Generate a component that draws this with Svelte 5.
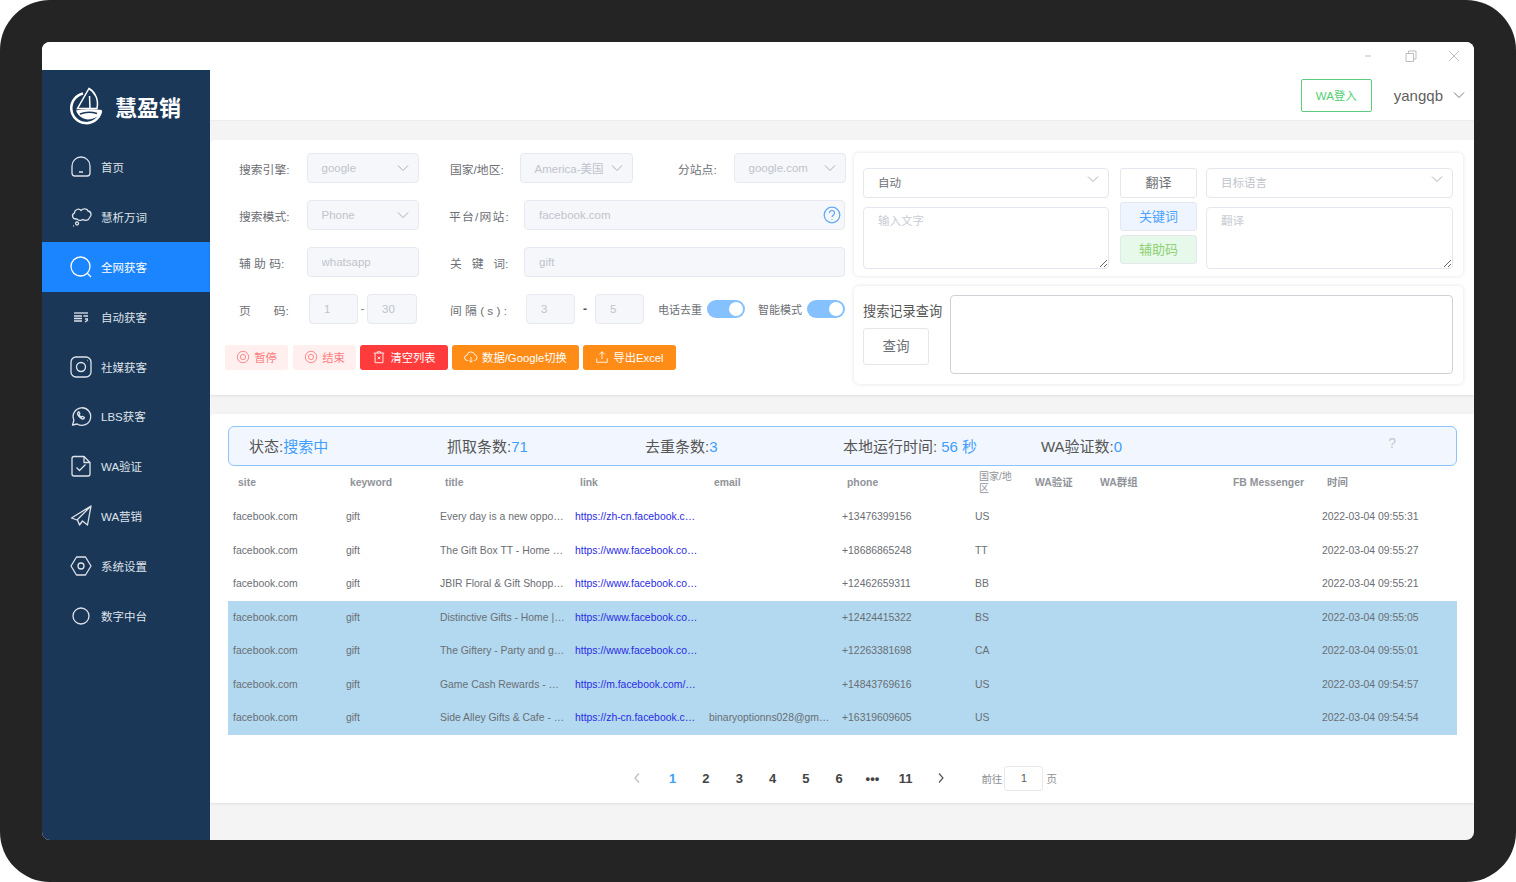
<script>
  const nav = [
    { label: '首页', icon: ['M7 22V15a9 9 0 0 1 18 0v7a3 3 0 0 1-3 3H10a3 3 0 0 1-3-3Z', 'M14 21h4'] },
    { label: '慧析万词', icon: ['M11 18c-3.500 0-5-4.500-1.500-6 0-3.500 4.500-5 6.500-2.500 2-2.500 6.500-2 7 .5 3.500.5 4 5 1.500 6.500-.5 3-4.500 3.500-6.500 2-2 1.500-5 1-6-.5Z', 'M12 21a1.500 1.500 0 1 0 .1 0', 'M8 25h.8'] },
    { label: '全网获客', icon: ['M15.500 6a9.500 9.500 0 1 0 0 19 9.500 9.500 0 0 0 0-19Z', 'M22.500 22.500l3.500 3.500'] },
    { label: '自动获客', icon: ['M9 12h14', 'M9 15h8M9 17.500h8M9 20h8', 'M18.500 15h4.500M20 18h3M20 21l3-2'] },
    { label: '社媒获客', icon: ['M11 6h10a5 5 0 0 1 5 5v10a5 5 0 0 1-5 5H11a5 5 0 0 1-5-5V11a5 5 0 0 1 5-5Z', 'M16 11.500a4.500 4.500 0 1 0 0 9 4.500 4.500 0 0 0 0-9Z', 'M22 9.500h.5'] },
    { label: 'LBS获客', icon: ['M7.500 25l1.400-4.800A8.800 8.800 0 1 1 12.200 24Z', 'M13 12.500c-1 1 0 3 1.500 4.500s3.500 2.500 4.500 1.500l.5-1-2-1.200-1 .8c-1-.4-2-1.400-2.400-2.400l.8-1-1.200-2Z'] },
    { label: 'WA验证', icon: ['M9 6.500h10l6 6V24a2 2 0 0 1-2 2H9a2 2 0 0 1-2-2V8.500a2 2 0 0 1 2-2Z', 'M19 6.500v6h6', 'M11.500 17.500l3 3 6-6'] },
    { label: 'WA营销', icon: ['M26 6L6.500 18l5.500 2L26 6Zl-3.500 19-5-4-3 4-2-5'] },
    { label: '系统设置', icon: ['M11.500 7h9L26 16l-5.500 9h-9L6 16Z', 'M16 13a3 3 0 1 0 0 6 3 3 0 0 0 0-6Z'] },
    { label: '数字中台', icon: ['M16 8a8 8 0 1 0 0 16 8 8 0 0 0 0-16Z'] }
  ];

  const rows = [
    ['Every day is a new oppo…', 'https://zh-cn.facebook.c…', '', '+13476399156', 'US', '2022-03-04 09:55:31'],
    ['The Gift Box TT - Home …', 'https://www.facebook.co…', '', '+18686865248', 'TT', '2022-03-04 09:55:27'],
    ['JBIR Floral & Gift Shopp…', 'https://www.facebook.co…', '', '+12462659311', 'BB', '2022-03-04 09:55:21'],
    ['Distinctive Gifts - Home |…', 'https://www.facebook.co…', '', '+12424415322', 'BS', '2022-03-04 09:55:05'],
    ['The Giftery - Party and g…', 'https://www.facebook.co…', '', '+12263381698', 'CA', '2022-03-04 09:55:01'],
    ['Game Cash Rewards - …', 'https://m.facebook.com/…', '', '+14843769616', 'US', '2022-03-04 09:54:57'],
    ['Side Alley Gifts & Cafe - …', 'https://zh-cn.facebook.c…', 'binaryoptionns028@gm…', '+16319609605', 'US', '2022-03-04 09:54:54']
  ];

  const columns = [
    ['site', 112], ['keyword', 95], ['title', 135], ['link', 134], ['email', 133], ['phone', 133],
    ['国家/地区', 55], ['WA验证', 65], ['WA群组', 133], ['FB Messenger', 94], ['时间', 140]
  ];

  const pages = ['1', '2', '3', '4', '5', '6', '•••', '11'];
</script>

{#snippet chevron()}
  <svg class="chevron" viewBox="0 0 12 8" width="12" height="8"><path d="M1 1.500l5 5 5-5" /></svg>
{/snippet}

<div class="frame">
  <div class="window">
    <div class="titlebar">
      <svg viewBox="0 0 12 12" width="12" height="12"><path d="M3 6h6" /></svg>
      <svg viewBox="0 0 12 12" width="12" height="12"><path d="M1 3.500h7.500V11.500H1ZM3.500 3.500V1H11v8H8.500" /></svg>
      <svg viewBox="0 0 12 12" width="12" height="12"><path d="M1 1l10 10M11 1L1 11" /></svg>
    </div>
    <div class="body">
      <aside class="sidebar">
        <div class="logo">
          <svg viewBox="0 0 34 38" width="34" height="38">
            <path class="ring" d="M14 6.500A15 15 0 1 0 32 24" />
            <path class="sail" d="M20 1.500c6 3.500 10 11 8 20H8.500L20 1.500Z" />
            <path class="sail" d="M20.500 9L21 21.500" />
            <path class="hull" d="M7 23.500c5-1.500 20-1.500 26-.5-2 6-8 9.500-14 9.500-5 0-10-3.500-12-9Z" />
            <path class="wave" d="M11 27c5-2 12-2 17-.5" />
          </svg>
          <span>慧盈销</span>
        </div>
        <nav>
          {#each nav as item}
            <div class="nav-item" class:active={item.label === '全网获客'}>
              <svg viewBox="0 0 32 32" width="32" height="32">
                {#each item.icon as d}<path {d} />{/each}
              </svg>
              <span>{item.label}</span>
            </div>
          {/each}
        </nav>
      </aside>

      <main>
        <header>
          <button class="wa-login">WA登入</button>
          <span class="user">yangqb</span>
          {@render chevron()}
        </header>

        <section class="card top-card">
          <div class="form">
            <div class="row">
              <span class="lbl first">搜索引擎:</span>
              <div class="select w112">google{@render chevron()}</div>
              <span class="lbl l-country">国家/地区:</span>
              <div class="select w113">America-美国{@render chevron()}</div>
              <span class="lbl l-site">分站点:</span>
              <div class="select w112">google.com{@render chevron()}</div>
            </div>
            <div class="row">
              <span class="lbl first">搜索模式:</span>
              <div class="select w112">Phone{@render chevron()}</div>
              <span class="lbl spaced l-platform">平台/网站:</span>
              <div class="wide">
                <input disabled value="facebook.com" />
                <svg class="help" viewBox="0 0 18 18" width="18" height="18">
                  <circle cx="9" cy="9" r="7.800" />
                  <path d="M6.500 7a2.500 2.500 0 1 1 3.800 2.100C9.400 9.700 9 10.200 9 11.200M9 13v.8" />
                </svg>
              </div>
            </div>
            <div class="row">
              <span class="lbl first">辅 助 码:</span>
              <input class="w112 field" disabled value="whatsapp" />
              <span class="lbl l-keyword">关   键   词:</span>
              <div class="wide"><input disabled value="gift" /></div>
            </div>
            <div class="row">
              <span class="lbl first">页       码:</span>
              <input class="num lead" disabled value="1" />
              <span class="dash thin">-</span>
              <input class="num w50" disabled value="30" />
              <span class="lbl l-interval">间 隔 ( s ) :</span>
              <input class="num" disabled value="3" />
              <span class="dash">-</span>
              <input class="num" disabled value="5" />
              <span class="lbl small l-dedupe">电话去重</span>
              <span class="switch"></span>
              <span class="lbl small l-smart">智能模式</span>
              <span class="switch"></span>
            </div>
            <div class="actions">
              <button class="btn soft b-pause">
                <svg viewBox="0 0 16 16" width="14" height="14"><circle cx="8" cy="8" r="6.500" /><circle cx="8" cy="8" r="3" /></svg>暂停
              </button>
              <button class="btn soft b-stop">
                <svg viewBox="0 0 16 16" width="14" height="14"><circle cx="8" cy="8" r="6.500" /><circle cx="8" cy="8" r="3" /></svg>结束
              </button>
              <button class="btn red b-clear">
                <svg viewBox="0 0 16 16" width="14" height="14"><path d="M2 3.500h12M6 3.500V2h4v1.500M3.500 3.500V14.500h9V3.500M6.500 7.500l3 3M9.500 7.500l-3 3" /></svg>清空列表
              </button>
              <button class="btn orange b-switch">
                <svg viewBox="0 0 16 16" width="14" height="14"><path d="M4.500 12H4a3 3 0 0 1-.5-6 4.500 4.500 0 0 1 8.800-.5A3.300 3.300 0 0 1 12 12h-.5M8 8v6M6 12l2 2 2-2" /></svg>数据/Google切换
              </button>
              <button class="btn orange b-export">
                <svg viewBox="0 0 16 16" width="14" height="14"><path d="M8 10.500V2M5 5l3-3 3 3M2 9.500v4.500h12V9.500" /></svg>导出Excel
              </button>
            </div>
          </div>

          <div class="side">
            <div class="panel translate">
              <div class="t-col">
                <div class="t-select dark">自动{@render chevron()}</div>
                <textarea placeholder="输入文字"></textarea>
              </div>
              <div class="t-mid">
                <button class="t-btn">翻译</button>
                <button class="t-btn blue">关键词</button>
                <button class="t-btn green">辅助码</button>
              </div>
              <div class="t-col">
                <div class="t-select">目标语言{@render chevron()}</div>
                <textarea placeholder="翻译"></textarea>
              </div>
            </div>
            <div class="panel history">
              <div class="h-left">
                <span>搜索记录查询</span>
                <button>查询</button>
              </div>
              <textarea></textarea>
            </div>
          </div>
        </section>

        <section class="card results">
          <div class="status">
            <div>状态:<b>搜索中</b></div>
            <div>抓取条数:<b>71</b></div>
            <div>去重条数:<b>3</b></div>
            <div>本地运行时间:<b class="gap">56 秒</b></div>
            <div>WA验证数:<b>0</b></div>
            <span class="q">?</span>
          </div>
          <table>
            <colgroup>
              {#each columns as col}<col style="width:{col[1]}px" />{/each}
            </colgroup>
            <thead>
              <tr>{#each columns as col}<th>{col[0]}</th>{/each}</tr>
            </thead>
            <tbody>
              {#each rows as r, i}
                <tr class:picked={i >= 3}>
                  <td>facebook.com</td>
                  <td>gift</td>
                  <td>{r[0]}</td>
                  <td class="link">{r[1]}</td>
                  <td>{r[2]}</td>
                  <td>{r[3]}</td>
                  <td>{r[4]}</td>
                  <td></td>
                  <td></td>
                  <td></td>
                  <td>{r[5]}</td>
                </tr>
              {/each}
            </tbody>
          </table>
          <div class="pager">
            <svg class="arrow off" viewBox="0 0 8 12" width="8" height="12"><path d="M6 1.500L2 6l4 4.500" /></svg>
            {#each pages as p, i}
              <span class="page" class:current={i === 0}>{p}</span>
            {/each}
            <svg class="arrow" viewBox="0 0 8 12" width="8" height="12"><path d="M2 1.500L6 6l-4 4.500" /></svg>
            <span class="goto">前往</span>
            <input class="jump" value="1" />
            <span class="goto">页</span>
          </div>
        </section>
      </main>
    </div>
  </div>
</div>

<style>
  :global(body) {
    margin: 0;
    background: #fff;
  }

  :global(*) {
    box-sizing: border-box;
  }

  .frame {
    width: 1516px;
    height: 882px;
    padding: 42px;
    background: #242424;
    border-radius: 50px;
    font-family: "Liberation Sans", "Noto Sans CJK SC", sans-serif;
    color: #606266;
    overflow: hidden;
  }

  .window {
    height: 798px;
    background: #f4f4f4;
    border-radius: 8px;
    overflow: hidden;
    display: flex;
    flex-direction: column;
  }

  .titlebar {
    height: 28px;
    flex-shrink: 0;
    background: #fff;
    display: flex;
    justify-content: flex-end;
    align-items: center;
    gap: 31px;
    padding-right: 14px;
  }

  .titlebar svg path {
    fill: none;
    stroke: #bdbdbd;
    stroke-width: 1;
  }

  .body {
    flex: 1;
    display: flex;
    min-height: 0;
  }

  .sidebar {
    width: 168px;
    flex-shrink: 0;
    background: #1b3758;
  }

  .logo {
    height: 72px;
    display: flex;
    align-items: center;
    gap: 12px;
    padding-left: 27px;
    color: #fff;
    font-size: 22px;
    font-weight: 700;
  }

  .logo svg * {
    fill: none;
    stroke: #fff;
  }

  .ring {
    stroke-width: 2.500;
  }

  .sail {
    stroke-width: 1.500;
  }

  .logo svg .hull {
    fill: #fff;
    stroke: none;
  }

  .logo svg .wave {
    stroke: #1b3758;
    stroke-width: 1.500;
  }

  .nav-item {
    height: 49.900px;
    display: flex;
    align-items: center;
    gap: 4px;
    padding-left: 23px;
    font-size: 11.500px;
    color: #dfe3e9;
  }

  .nav-item.active {
    background: #1a85ff;
    color: #fff;
  }

  .nav-item svg path {
    fill: none;
    stroke: #dfe3e9;
    stroke-width: 1.300;
    stroke-linejoin: round;
  }

  .nav-item.active svg path {
    stroke: #fff;
  }

  main {
    flex: 1;
    min-width: 0;
    display: flex;
    flex-direction: column;
  }

  header {
    height: 51px;
    flex-shrink: 0;
    background: #fff;
    border-bottom: 1px solid #ececec;
    display: flex;
    align-items: center;
    justify-content: flex-end;
    padding: 0 9px 0 0;
  }

  header .chevron {
    margin-left: 10px;
  }

  header .chevron path {
    stroke: #777;
  }

  .wa-login {
    width: 71px;
    height: 33px;
    padding: 0;
    background: #fff;
    border: 1px solid #5ecb7e;
    border-radius: 2px;
    color: #4fd072;
    font: inherit;
    font-size: 11.500px;
    margin-right: 22px;
  }

  .user {
    font-size: 15px;
    color: #5f5f5f;
  }

  .chevron {
    flex-shrink: 0;
  }

  .chevron path {
    fill: none;
    stroke: #a9adb5;
    stroke-width: 1;
  }

  .card {
    background: #fff;
    box-shadow: 0 1px 3px rgba(0, 0, 0, 0.08);
  }

  .top-card {
    margin-top: 19px;
    height: 255px;
    padding: 13px 11px 0 15px;
    display: flex;
    border-radius: 4px 0 0 0;
  }

  .form {
    width: 629px;
    flex-shrink: 0;
    display: flex;
    flex-direction: column;
    gap: 17px;
  }

  .row {
    height: 30px;
    display: flex;
    align-items: center;
  }

  .lbl {
    flex-shrink: 0;
    font-size: 11.800px;
    color: #6d6f75;
    white-space: pre;
  }

  .lbl.first {
    width: 82px;
    padding-left: 14px;
  }

  .lbl.spaced {
    letter-spacing: 1.200px;
  }

  .lbl.small {
    font-size: 11px;
  }

  .l-country {
    margin-left: 31px;
    width: 70px;
  }

  .l-site {
    margin-left: 45px;
    width: 56px;
  }

  .l-platform {
    margin-left: 30px;
    width: 75px;
  }

  .l-keyword {
    margin-left: 31px;
    width: 74px;
  }

  .l-interval {
    margin-left: 33px;
    width: 76px;
  }

  .l-dedupe {
    margin-left: 14px;
    width: 49px;
  }

  .l-smart {
    margin-left: 13px;
    width: 49px;
  }

  .select,
  input,
  .wide input {
    height: 30px;
    background: #f5f7fa;
    border: 1px solid #e6e9ef;
    border-radius: 4px;
    color: #c0c4cc;
    font: inherit;
    font-size: 11.500px;
  }

  input:disabled {
    opacity: 1;
    -webkit-text-fill-color: #c0c4cc;
  }

  .select {
    display: flex;
    align-items: center;
    justify-content: space-between;
    padding: 0 9px 0 13.500px;
    flex-shrink: 0;
  }

  .w112 {
    width: 112px;
  }

  .w113 {
    width: 113px;
  }

  .field {
    padding: 0 13.500px;
  }

  .wide {
    width: 321px;
    position: relative;
  }

  .wide input {
    width: 100%;
    padding: 0 14px;
    display: block;
  }

  .help {
    position: absolute;
    right: 4px;
    top: 6px;
  }

  .help * {
    fill: none;
    stroke: #64abf5;
    stroke-width: 1.300;
  }

  .num {
    width: 49px;
    text-align: left;
    padding: 0 14px;
  }

  .num.lead {
    margin-left: 2px;
  }

  .num.w50 {
    width: 50px;
  }

  .dash {
    width: 20px;
    text-align: center;
    font-size: 12px;
    font-weight: 700;
    color: #555;
  }

  .dash.thin {
    width: 9px;
    font-weight: 400;
    color: #888;
  }

  .switch {
    width: 38px;
    height: 18px;
    flex-shrink: 0;
    border-radius: 9px;
    background: #85c1ff;
    display: flex;
    justify-content: flex-end;
    align-items: center;
    padding-right: 2px;
  }

  .switch::after {
    content: "";
    width: 14px;
    height: 14px;
    background: #fff;
    border-radius: 50%;
  }

  .actions {
    margin-top: 4px;
    display: flex;
    gap: 4px;
  }

  .btn {
    height: 25px;
    padding: 0 0 2px;
    border: 0;
    border-radius: 3px;
    font: inherit;
    font-size: 11.300px;
    display: flex;
    align-items: center;
    justify-content: center;
    gap: 4px;
    white-space: nowrap;
  }

  .btn svg * {
    fill: none;
    stroke: currentColor;
    stroke-width: 1;
  }

  .b-pause {
    width: 63px;
    margin-right: 1px;
  }

  .b-stop {
    width: 63px;
  }

  .b-clear {
    width: 88px;
  }

  .b-switch {
    width: 127px;
  }

  .b-export {
    width: 93px;
  }

  .soft {
    background: #ffefef;
    color: #fb7d7d;
  }

  .red {
    background: #ff3b3b;
    color: #fff;
  }

  .orange {
    background: #ff8c17;
    color: #fff;
  }

  .side {
    flex: 1;
    min-width: 0;
    display: flex;
    flex-direction: column;
    gap: 10px;
  }

  .panel {
    background: #fff;
    border-radius: 5px;
    box-shadow: 0 0 4px rgba(0, 0, 0, 0.12);
    display: flex;
  }

  textarea {
    display: block;
    background: #fff;
    border: 1px solid #e4e7ed;
    border-radius: 4px;
    font: inherit;
    font-size: 11.500px;
    padding: 4px 14px;
    outline: none;
  }

  textarea::placeholder {
    color: #c9ccd3;
  }

  .translate {
    height: 123px;
    padding: 15px 10px 0 9px;
  }

  .t-col {
    width: 247px;
    display: flex;
    flex-direction: column;
    gap: 9px;
  }

  .t-col:first-child {
    width: 246px;
  }

  .t-col textarea {
    width: 100%;
    height: 62px;
  }

  .t-select {
    height: 30px;
    border: 1px solid #e4e7ed;
    border-radius: 4px;
    padding: 0 9px 2px 14px;
    display: flex;
    align-items: center;
    justify-content: space-between;
    font-size: 11.500px;
    color: #c0c4cc;
  }

  .t-select.dark {
    color: #6d6f75;
  }

  .t-select .chevron {
    margin-top: -6px;
  }

  .t-mid {
    width: 77px;
    margin: 0 9px 0 11px;
    display: flex;
    flex-direction: column;
    gap: 4px;
  }

  .t-btn {
    height: 29px;
    padding: 0 0 3px;
    background: #fff;
    border: 1px solid #e4e7ed;
    border-radius: 3px;
    font: inherit;
    font-size: 13px;
    color: #6d6f75;
  }

  .t-btn:first-child {
    height: 30px;
  }

  .t-btn.blue {
    background: #eff5fe;
    color: #4ba3ff;
  }

  .t-btn.green {
    background: #e7f9ea;
    color: #8fd173;
  }

  .history {
    height: 98px;
    padding: 9px 10px 10px 9px;
  }

  .h-left {
    width: 87px;
    flex-shrink: 0;
    padding-top: 6px;
    font-size: 13.200px;
    color: #555;
    white-space: nowrap;
  }

  .h-left button {
    display: block;
    width: 66px;
    height: 37px;
    margin-top: 8px;
    padding: 0 0 3px;
    background: #fff;
    border: 1px solid #e6e6e6;
    border-radius: 3px;
    font: inherit;
    font-size: 13.500px;
    color: #6d6f75;
  }

  .history textarea {
    flex: 1;
    border-color: #cfd1d6;
    resize: none;
  }

  .results {
    margin-top: 19px;
    height: 389px;
    padding: 12px 17px 0 18px;
    border-radius: 4px 0 0 0;
  }

  .status {
    height: 40px;
    background: #f2f7ff;
    border: 1px solid #8ec3fb;
    border-radius: 6px;
    padding: 0 0 2px 20px;
    display: flex;
    align-items: center;
    font-size: 15px;
    color: #555;
    position: relative;
  }

  .status div {
    width: 198px;
    white-space: nowrap;
  }

  .status b {
    font-weight: 400;
    color: #3f9dff;
  }

  .status b.gap {
    margin-left: 4px;
  }

  .q {
    position: absolute;
    right: 60px;
    top: 8px;
    color: #c6c9ce;
    font-size: 14px;
  }

  table {
    width: 1229px;
    table-layout: fixed;
    border-collapse: collapse;
    font-size: 10.400px;
  }

  th {
    height: 34px;
    padding: 0 10px;
    text-align: left;
    font-weight: 700;
    color: #909399;
    line-height: 12.500px;
  }

  th:nth-child(7) {
    padding-left: 9px;
    font-weight: 400;
    font-size: 10px;
  }

  th:nth-child(n + 8) {
    white-space: nowrap;
  }

  td {
    height: 33.500px;
    padding: 0 0 0 5px;
    color: #6b6e73;
    white-space: nowrap;
    overflow: hidden;
  }

  td:nth-child(2) {
    padding-left: 6px;
  }

  .picked td {
    background: #b2d9f0;
  }

  td.link {
    color: #2a2ae6;
  }

  .pager {
    margin-top: 31px;
    height: 25px;
    display: flex;
    align-items: center;
    padding-left: 405px;
  }

  .arrow {
    margin-right: 15px;
  }

  .arrow path {
    fill: none;
    stroke: #555;
    stroke-width: 1.200;
  }

  .arrow.off path {
    stroke: #b9bcc2;
  }

  .page {
    width: 33.300px;
    text-align: center;
    font-size: 13px;
    font-weight: 700;
    color: #444;
  }

  .page.current {
    color: #409eff;
  }

  .pager .arrow:not(.off) {
    margin: 0 0 0 15px;
  }

  .goto {
    font-size: 10.500px;
    color: #8c8f94;
  }

  .arrow + .goto {
    margin-left: 36px;
  }

  .jump {
    width: 39px;
    height: 25px;
    margin: 0 3px 0 2px;
    background: #fff;
    border: 1px solid #e8e8e8;
    border-radius: 3px;
    color: #606266;
    text-align: center;
    font-size: 11.500px;
  }
</style>
